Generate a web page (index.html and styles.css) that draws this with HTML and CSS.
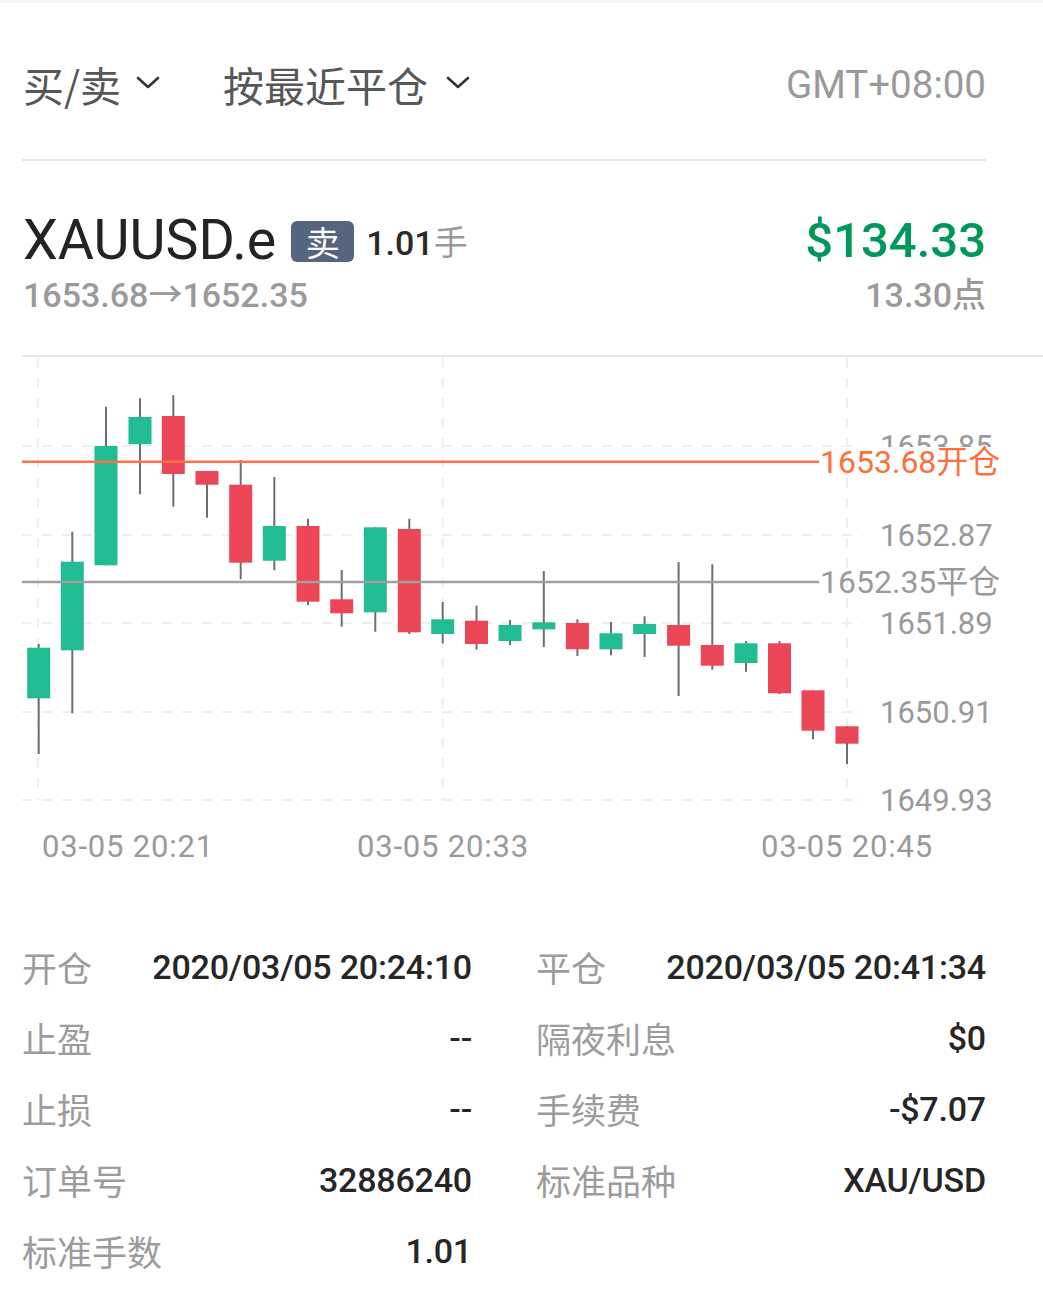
FILE: index.html
```html
<!DOCTYPE html>
<html lang="zh-CN">
<head>
<meta charset="utf-8">
<title>XAUUSD.e 平仓详情</title>
<link rel="stylesheet" href="styles.css">
</head>
<body>
<div class="page">
  <div class="topstrip"></div>

  <div class="filters">
    <div class="filter">
      <span>买/卖</span>
      <svg class="chev" viewBox="0 0 24 14" width="24" height="14"><polyline points="2,2 12,11 22,2"/></svg>
    </div>
    <div class="filter filter-sort">
      <span>按最近平仓</span>
      <svg class="chev" viewBox="0 0 24 14" width="24" height="14"><polyline points="2,2 12,11 22,2"/></svg>
    </div>
    <div class="tz">GMT+08:00</div>
  </div>

  <div class="divider"></div>

  <section class="position">
    <div class="pos-row">
      <div class="pos-title">
        <span class="symbol">XAUUSD.e</span>
        <span class="badge">卖</span>
        <span class="lots"><b>1.01</b><span class="unit">手</span></span>
      </div>
      <div class="profit">$134.33</div>
    </div>
    <div class="pos-row pos-sub">
      <div class="prices">1653.68→1652.35</div>
      <div class="points">13.30点</div>
    </div>
  </section>

  <div class="divider divider-wide"></div>

  <svg class="chart" width="1043" height="540" viewBox="0 357 1043 540">
    <g class="grid">
      <line x1="38" y1="358" x2="38" y2="800"/>
      <line x1="442.7" y1="358" x2="442.7" y2="800"/>
      <line x1="847" y1="358" x2="847" y2="800"/>
      <line x1="22" y1="446" x2="863" y2="446"/>
      <line x1="22" y1="535" x2="863" y2="535"/>
      <line x1="22" y1="623" x2="863" y2="623"/>
      <line x1="22" y1="712" x2="863" y2="712"/>
      <line x1="22" y1="800" x2="863" y2="800"/>
    </g>

    <g class="wicks">
      <line x1="38.7" y1="644" x2="38.7" y2="754"/>
      <line x1="72.3" y1="531.7" x2="72.3" y2="713.3"/>
      <line x1="106" y1="406.7" x2="106" y2="565.3"/>
      <line x1="140" y1="398.3" x2="140" y2="494.3"/>
      <line x1="173.3" y1="395" x2="173.3" y2="506.7"/>
      <line x1="207" y1="471" x2="207" y2="517.7"/>
      <line x1="240.7" y1="460" x2="240.7" y2="579.3"/>
      <line x1="274.3" y1="477" x2="274.3" y2="570.3"/>
      <line x1="308" y1="518.7" x2="308" y2="605"/>
      <line x1="341.7" y1="570" x2="341.7" y2="626.7"/>
      <line x1="375.3" y1="527.3" x2="375.3" y2="631.7"/>
      <line x1="409.3" y1="518.7" x2="409.3" y2="634"/>
      <line x1="442.7" y1="602" x2="442.7" y2="643.3"/>
      <line x1="476.5" y1="605.7" x2="476.5" y2="649.7"/>
      <line x1="510" y1="620" x2="510" y2="645"/>
      <line x1="543.8" y1="571" x2="543.8" y2="647"/>
      <line x1="577.4" y1="619.3" x2="577.4" y2="656"/>
      <line x1="611" y1="622" x2="611" y2="655.3"/>
      <line x1="644.6" y1="616.3" x2="644.6" y2="657"/>
      <line x1="678.6" y1="562" x2="678.6" y2="696"/>
      <line x1="712.3" y1="564.3" x2="712.3" y2="669.7"/>
      <line x1="746" y1="641" x2="746" y2="671.7"/>
      <line x1="779.5" y1="641" x2="779.5" y2="694"/>
      <line x1="813" y1="690.3" x2="813" y2="739.3"/>
      <line x1="847" y1="726.3" x2="847" y2="764"/>
    </g>

    <g class="bodies">
      <rect class="up" x="27.2" y="647.7" width="23" height="50.6"/>
      <rect class="up" x="60.8" y="561.7" width="23" height="88.6"/>
      <rect class="up" x="94.5" y="446" width="23" height="119.3"/>
      <rect class="up" x="128.5" y="417" width="23" height="27.3"/>
      <rect class="down" x="161.8" y="416" width="23" height="58"/>
      <rect class="down" x="195.5" y="471" width="23" height="13.7"/>
      <rect class="down" x="229.2" y="484.7" width="23" height="78"/>
      <rect class="up" x="262.8" y="526" width="23" height="34.7"/>
      <rect class="down" x="296.5" y="526" width="23" height="75.7"/>
      <rect class="down" x="330.2" y="599.3" width="23" height="14"/>
      <rect class="up" x="363.8" y="527.3" width="23" height="85"/>
      <rect class="down" x="397.8" y="529" width="23" height="103.3"/>
      <rect class="up" x="431.2" y="619.3" width="23" height="14.7"/>
      <rect class="down" x="465" y="620.7" width="23" height="23.3"/>
      <rect class="up" x="498.5" y="625" width="23" height="16"/>
      <rect class="up" x="532.3" y="622.3" width="23" height="7"/>
      <rect class="down" x="565.9" y="623" width="23" height="26.3"/>
      <rect class="up" x="599.5" y="633.3" width="23" height="16"/>
      <rect class="up" x="633.1" y="624" width="23" height="10"/>
      <rect class="down" x="667.1" y="625" width="23" height="20.7"/>
      <rect class="down" x="700.8" y="645" width="23" height="20.7"/>
      <rect class="up" x="734.5" y="643.3" width="23" height="19.7"/>
      <rect class="down" x="768" y="643.3" width="23" height="50"/>
      <rect class="down" x="801.5" y="690.3" width="23" height="40.4"/>
      <rect class="down" x="835.5" y="726.3" width="23" height="17.4"/>
    </g>

    <g class="axis-y">
      <text x="880" y="446">1653.85</text>
      <text x="880" y="535">1652.87</text>
      <text x="880" y="623">1651.89</text>
      <text x="880" y="712">1650.91</text>
      <text x="880" y="800">1649.93</text>
    </g>

    <line class="open-line" x1="22" y1="461.7" x2="819" y2="461.7"/>
    <rect class="tag-bg" x="819" y="447" width="190" height="30"/>
    <text class="open-tag" x="820" y="461.7">1653.68开仓</text>

    <line class="close-line" x1="22" y1="582" x2="819" y2="582"/>
    <text class="close-tag" x="820" y="582">1652.35平仓</text>

    <g class="axis-x">
      <text x="42" y="857">03-05 20:21</text>
      <text class="mid" x="443" y="857">03-05 20:33</text>
      <text class="mid" x="847" y="857">03-05 20:45</text>
    </g>
  </svg>

  <section class="details">
    <div class="cell"><span class="label">开仓</span><span class="val dt">2020/03/05 20:24:10</span></div>
    <div class="cell"><span class="label">平仓</span><span class="val dt">2020/03/05 20:41:34</span></div>
    <div class="cell"><span class="label">止盈</span><span class="val">--</span></div>
    <div class="cell"><span class="label">隔夜利息</span><span class="val">$0</span></div>
    <div class="cell"><span class="label">止损</span><span class="val">--</span></div>
    <div class="cell"><span class="label">手续费</span><span class="val">-$7.07</span></div>
    <div class="cell"><span class="label">订单号</span><span class="val">32886240</span></div>
    <div class="cell"><span class="label">标准品种</span><span class="val">XAU/USD</span></div>
    <div class="cell"><span class="label">标准手数</span><span class="val">1.01</span></div>
    <div class="cell"></div>
  </section>
</div>
</body>
</html>
```

FILE: styles.css
```css
* { box-sizing: border-box; }

html, body {
  margin: 0;
  padding: 0;
  background: #ffffff;
}

body {
  font-family: Roboto, "Noto Sans CJK SC", sans-serif;
  color: #222;
}

.page {
  width: 1043px;
}

.topstrip {
  height: 3px;
  background: #f5f5f5;
}

/* filter bar */
.filters {
  height: 156px;
  padding-top: 6px;
  margin: 0 57px 0 22px;
  display: flex;
  align-items: center;
}

.filter {
  display: flex;
  align-items: center;
  font-family: "Noto Sans CJK SC", sans-serif;
  font-size: 41px;
  line-height: 41px;
  color: #575757;
  padding-left: 1px;
}

.filter-sort {
  margin-left: 62px;
}

.chev {
  margin-left: 15px;
  margin-top: -2px;
}

.filter-sort .chev {
  margin-left: 18px;
}

.chev polyline {
  fill: none;
  stroke: #333;
  stroke-width: 2.6;
  stroke-linecap: round;
  stroke-linejoin: round;
}

.tz {
  margin-left: auto;
  font-size: 38.5px;
  line-height: 40px;
  color: #9a9a9a;
  padding-top: 2px;
}

.divider {
  height: 2px;
  background: #e8e8ec;
  margin: 0 57px 0 22px;
}

.divider-wide {
  margin-right: 0;
}

/* position summary */
.position {
  height: 194px;
  padding-top: 50px;
  margin: 0 57px 0 22px;
}

.pos-row {
  display: flex;
  align-items: center;
  justify-content: space-between;
  height: 60px;
}

.pos-title {
  display: flex;
  align-items: center;
}

.symbol {
  font-size: 55.5px;
  line-height: 60px;
  color: #232323;
  margin-left: 1px;
}

.badge {
  width: 63px;
  height: 41px;
  margin-left: 15px;
  border-radius: 6px;
  background: #55657f;
  color: #fff;
  font-family: "Noto Sans CJK SC", sans-serif;
  font-size: 34px;
  line-height: 41px;
  text-align: center;
}

.lots {
  margin-left: 12px;
  font-size: 34px;
  line-height: 40px;
  padding-top: 2px;
}

.lots b {
  font-weight: 500;
  color: #2a2a2a;
}

.unit {
  color: #9a9a9a;
  font-family: "Noto Sans CJK SC", sans-serif;
}

.profit {
  font-size: 49px;
  line-height: 60px;
  font-weight: 500;
  color: #00975b;
}

.pos-sub {
  height: 40px;
  margin-top: 4px;
}

.prices,
.points {
  font-size: 34px;
  line-height: 40px;
  font-weight: 500;
  color: #9a9a9a;
}

.prices {
  margin-left: 1px;
}

/* chart */
.chart {
  display: block;
}

.grid line {
  stroke: #efefef;
  stroke-width: 2;
  stroke-dasharray: 10 10;
}

.wicks line {
  stroke: #6e6e6e;
  stroke-width: 2;
}

.bodies .up {
  fill: #21bc93;
}

.bodies .down {
  fill: #ea4656;
}

.axis-y text,
.axis-x text {
  font-family: Roboto, "Noto Sans CJK SC", sans-serif;
  font-size: 31px;
  fill: #9a9a9a;
}

.axis-x text {
  letter-spacing: 0.8px;
}

.open-tag,
.close-tag {
  font-family: Roboto, "Noto Sans CJK SC", sans-serif;
  font-size: 32px;
  fill: #9a9a9a;
}

.axis-y text,
.open-tag,
.close-tag {
  dominant-baseline: central;
}

.axis-x .mid {
  text-anchor: middle;
}

.open-line {
  stroke: #ff7043;
  stroke-width: 2.4;
}

.close-line {
  stroke: #a0a0a0;
  stroke-width: 2.4;
}

.tag-bg {
  fill: #ffffff;
}

.open-tag {
  fill: #ff6d3a;
}

/* details */
.details {
  margin: 0 57px 0 22px;
  padding-top: 34px;
  display: grid;
  grid-template-columns: 450px 450px;
  column-gap: 64px;
  grid-auto-rows: 71px;
}

.cell {
  display: flex;
  align-items: center;
  justify-content: space-between;
}

.label {
  font-family: "Noto Sans CJK SC", sans-serif;
  font-size: 35px;
  color: #9c9c9c;
}

.val {
  font-size: 34px;
  font-weight: 500;
  color: #262626;
  letter-spacing: -0.2px;
}
```
